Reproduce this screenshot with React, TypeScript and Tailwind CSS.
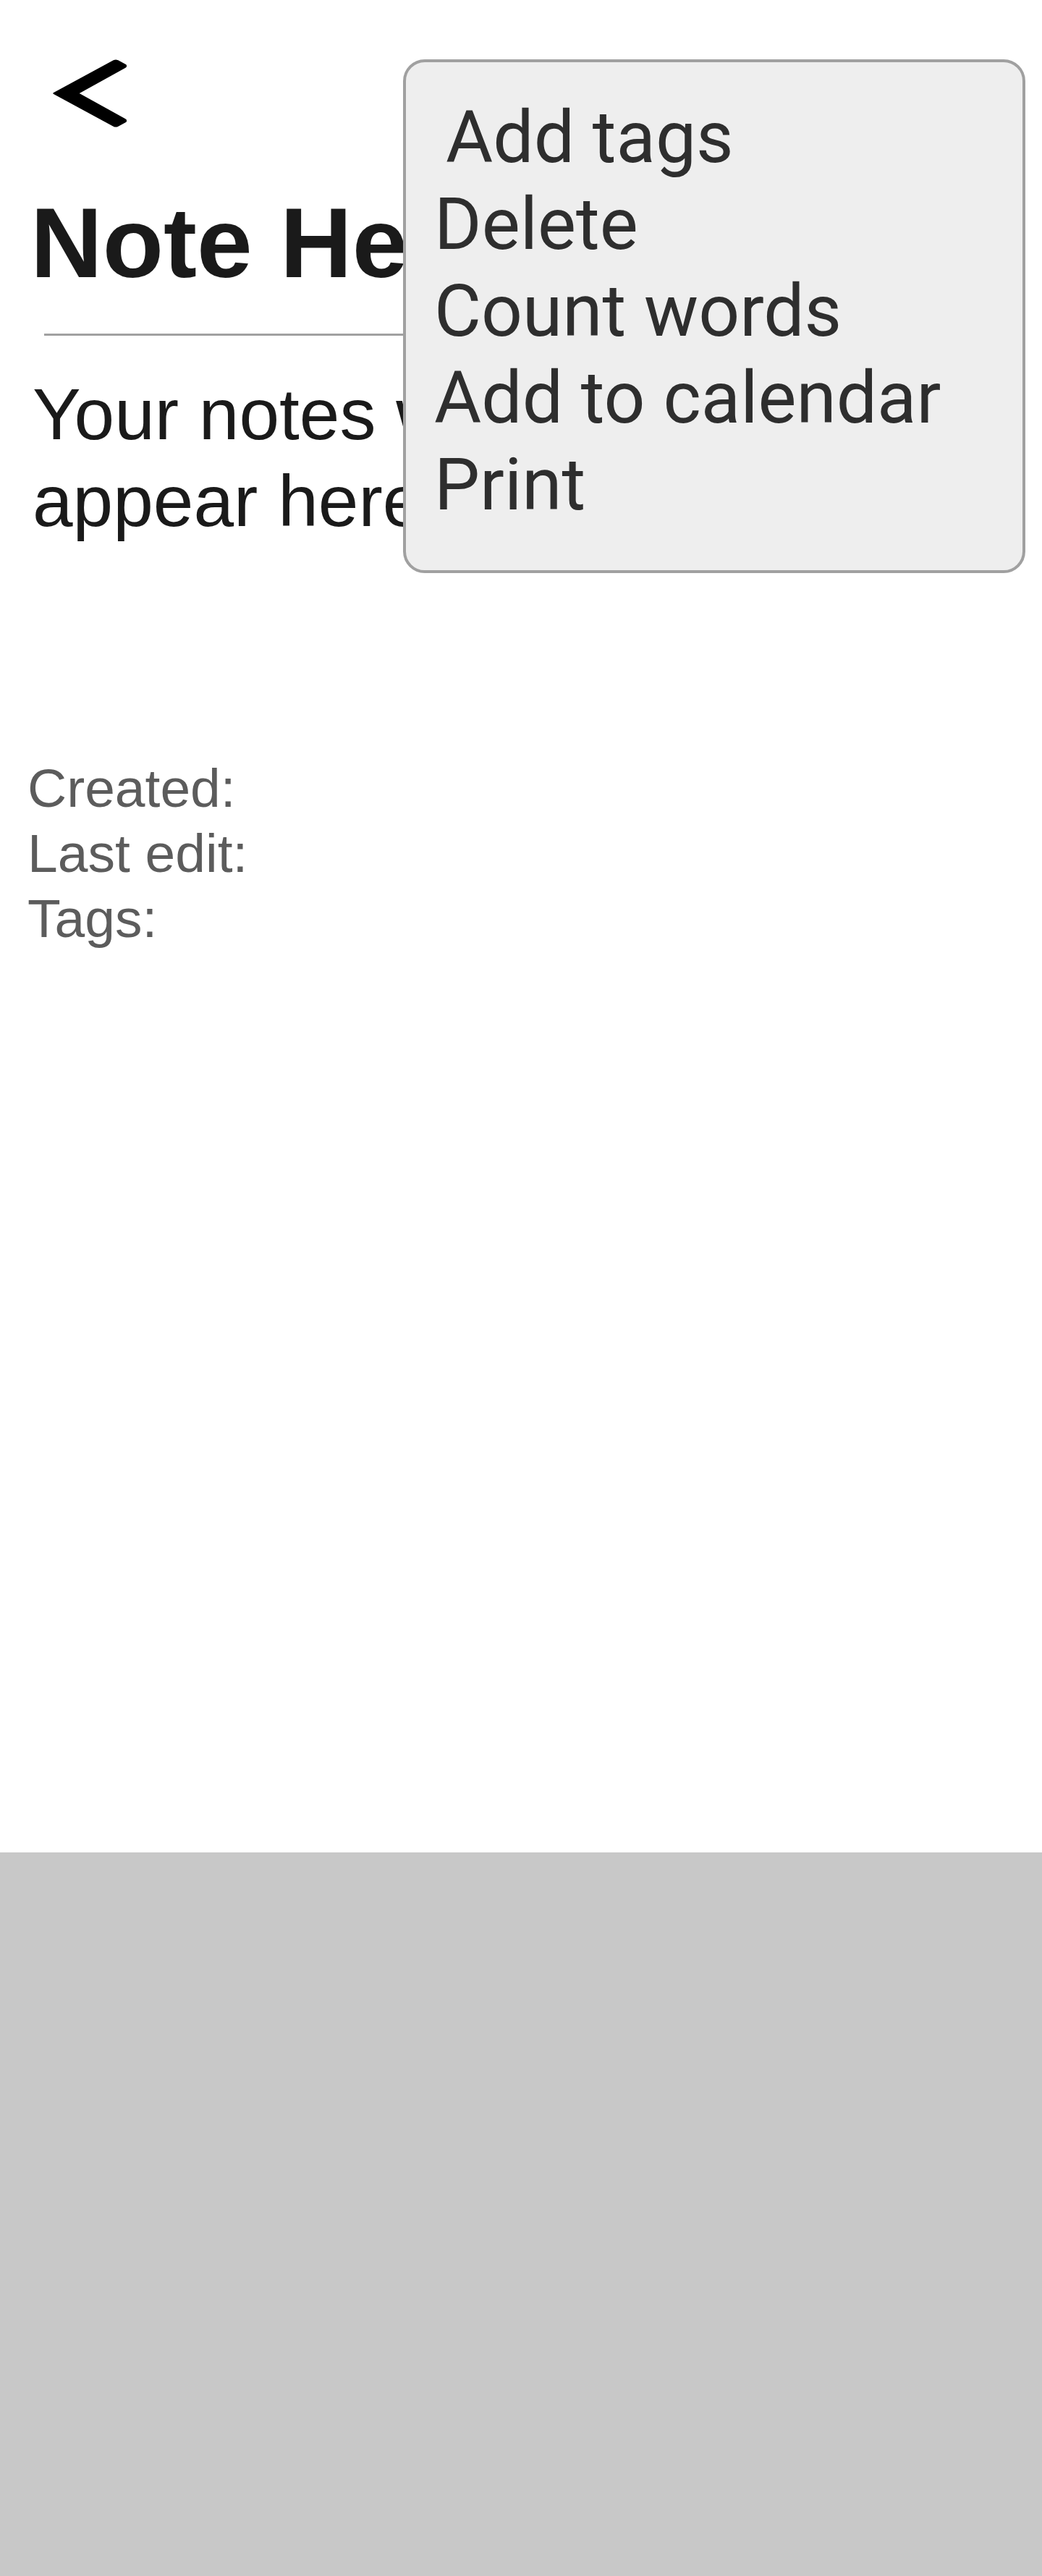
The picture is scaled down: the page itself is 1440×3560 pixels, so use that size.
import React from 'react';

const menuItems = ['Add tags', 'Delete', 'Count words', 'Add to calendar', 'Print'];

function BackChevron() {
  return (
    <svg width="102" height="94" viewBox="0 0 102 94" className="block">
      <path
        d="M1 47 L84 2 Q87 0.5 90 2 L101 8 Q102 10 100 11 L35 47 L100 83 Q102 84 101 86 L90 92 Q87 93.5 84 92 Z"
        fill="#000"
        stroke="#000"
        strokeWidth="1.5"
        strokeLinejoin="round"
      />
    </svg>
  );
}

function NoteMenu() {
  return (
    <div className="absolute left-[557px] top-[82px] w-[860px] h-[710px] rounded-[30px] border-4 border-[#a0a0a0] bg-[#eeeeee] pt-[44px] pl-[39px]">
      <ul className="font-['Roboto',sans-serif] text-[100px] leading-[120px] text-[#2e2e2e]">
        {menuItems.map((item, i) => (
          <li key={item} className={i === 0 ? 'pl-[16px]' : ''}>
            {item}
          </li>
        ))}
      </ul>
    </div>
  );
}

export default function App() {
  return (
    <div className="relative w-full h-[3560px] flex flex-col bg-white font-['Liberation_Sans',Arial,sans-serif]">
      <main className="h-[2560px] flex flex-col">
        <button className="ml-[73px] mt-[82px] w-[102px] h-[94px]">
          <BackChevron />
        </button>

        <h1 className="ml-[42px] mt-[90px] text-[138px] leading-none font-bold text-[#1a1a1a] whitespace-nowrap">
          Note Heading
        </h1>

        <div className="ml-[61px] mr-[61px] mt-[57px] h-[3px] bg-[#a0a0a0]" />

        <p className="ml-[45px] mt-[48px] w-[720px] text-[100px] leading-[120px] text-[#1a1a1a]">
          Your notes will appear here
        </p>

        <div className="ml-[38px] mt-[292px] text-[75px] leading-[90px] text-[#5c5c5c]">
          <div>Created:</div>
          <div>Last edit:</div>
          <div>Tags:</div>
        </div>
      </main>

      <footer className="h-[1000px] bg-[#c8c8c8]" />

      <NoteMenu />
    </div>
  );
}
